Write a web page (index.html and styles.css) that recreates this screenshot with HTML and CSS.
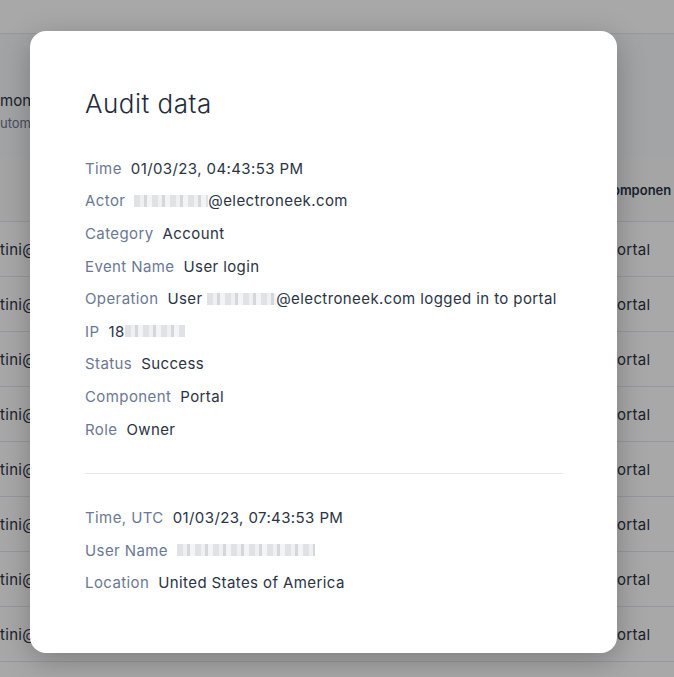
FILE: index.html
```html
<!DOCTYPE html>
<html>
<head>
<meta charset="utf-8">
<link rel="stylesheet" href="styles.css">
</head>
<body>
<div class="page">
  <div class="topbar"></div>
  <div class="summary">
    <div class="sum-title">mont</div>
    <div class="sum-sub">utoma</div>
  </div>
  <div class="table">
    <div class="thead"><span class="c1"></span><span class="c2">omponen</span></div>
    <div class="trow"><span class="c1">tini@</span><span class="c2">ortal</span></div>
    <div class="trow"><span class="c1">tini@</span><span class="c2">ortal</span></div>
    <div class="trow"><span class="c1">tini@</span><span class="c2">ortal</span></div>
    <div class="trow"><span class="c1">tini@</span><span class="c2">ortal</span></div>
    <div class="trow"><span class="c1">tini@</span><span class="c2">ortal</span></div>
    <div class="trow"><span class="c1">tini@</span><span class="c2">ortal</span></div>
    <div class="trow"><span class="c1">tini@</span><span class="c2">ortal</span></div>
    <div class="trow"><span class="c1">tini@</span><span class="c2">ortal</span></div>
  </div>
</div>
<div class="overlay"></div>
<div class="modal">
  <h1 class="title">Audit data</h1>
  <div class="rows">
    <div class="row"><span class="lbl">Time</span><span class="val">01/03/23, 04:43:53 PM</span></div>
    <div class="row"><span class="lbl">Actor</span><span class="val"><span class="blur b-actor"></span>@electroneek.com</span></div>
    <div class="row"><span class="lbl">Category</span><span class="val">Account</span></div>
    <div class="row"><span class="lbl">Event Name</span><span class="val">User login</span></div>
    <div class="row"><span class="lbl">Operation</span><span class="val">User <span class="blur b-op"></span>@electroneek.com logged in to portal</span></div>
    <div class="row"><span class="lbl">IP</span><span class="val">18<span class="blur b-ip"></span></span></div>
    <div class="row"><span class="lbl">Status</span><span class="val">Success</span></div>
    <div class="row"><span class="lbl">Component</span><span class="val">Portal</span></div>
    <div class="row"><span class="lbl">Role</span><span class="val">Owner</span></div>
  </div>
  <hr class="divider">
  <div class="rows">
    <div class="row"><span class="lbl">Time, UTC</span><span class="val">01/03/23, 07:43:53 PM</span></div>
    <div class="row"><span class="lbl">User Name</span><span class="val"><span class="blur b-user"></span></span></div>
    <div class="row"><span class="lbl">Location</span><span class="val">United States of America</span></div>
  </div>
</div>
</body>
</html>
```

FILE: styles.css
```css
* { box-sizing: border-box; }
html, body { margin: 0; padding: 0; }
body {
  width: 674px;
  height: 677px;
  overflow: hidden;
  font-family: Inter, "Noto Sans", sans-serif;
  position: relative;
  background: #fff;
}
.page { width: 674px; }
.topbar {
  height: 34px;
  background: #ffffff;
  border-bottom: 1px solid #e4e7ee;
}
.summary {
  height: 124px;
  background: #f8f9fb;
  padding: 56px 0 0 0;
}
.sum-title { font-size: 15px; color: #2b3345; line-height: 22px; }
.sum-sub { font-size: 13px; color: #6b7894; line-height: 22px; }
.table { background: #fff; }
.thead {
  height: 64px;
  display: flex;
  align-items: center;
  background: #fafbfc;
  border-bottom: 1px solid #e4e7ee;
  font-size: 13px;
  font-weight: 600;
  color: #2b3345;
}
.trow {
  height: 55px;
  display: flex;
  align-items: center;
  border-bottom: 1px solid #e4e7ee;
  font-size: 15px;
  color: #2b3345;
  letter-spacing: 0.3px;
}
.c1 { width: 617px; flex: none; white-space: nowrap; }
.thead .c1 { width: 612px; }
.c2 { white-space: nowrap; }

.overlay {
  position: absolute;
  inset: 0;
  background: rgba(0, 0, 0, 0.34);
}
.modal {
  position: absolute;
  left: 30px;
  top: 31px;
  width: 587px;
  height: 622px;
  background: #fff;
  border-radius: 16px;
  padding: 57px 54px 0 55px;
  box-shadow: 0 8px 30px rgba(0, 0, 0, 0.25);
}
.title {
  margin: 0;
  font-size: 26px;
  line-height: 32px;
  font-weight: 300;
  color: #222b3d;
  letter-spacing: 0.5px;
}
.rows {
  display: flex;
  flex-direction: column;
}
.modal .title + .rows { margin-top: 32px; }
.row {
  height: 32.6px;
  display: flex;
  align-items: center;
  font-size: 15px;
  gap: 9px;
  letter-spacing: 0.4px;
  white-space: nowrap;
}
.lbl { color: #6b7894; }
.val { color: #2b3345; display: inline-flex; align-items: center; white-space: pre; }
.divider {
  border: 0;
  border-top: 1px solid #e6e8ef;
  margin: 28px 0 27px 0;
}
.blur {
  display: inline-block;
  height: 12px;
  background:
    repeating-linear-gradient(90deg, #e0e2e6 0 6px, #eef0f2 6px 10px, #d4d7dc 10px 13px, #f3f4f6 13px 18px);
}
.b-actor { width: 74px; }
.b-op { width: 69px; }
.b-ip { width: 60px; }
.b-user { width: 138px; }
```
